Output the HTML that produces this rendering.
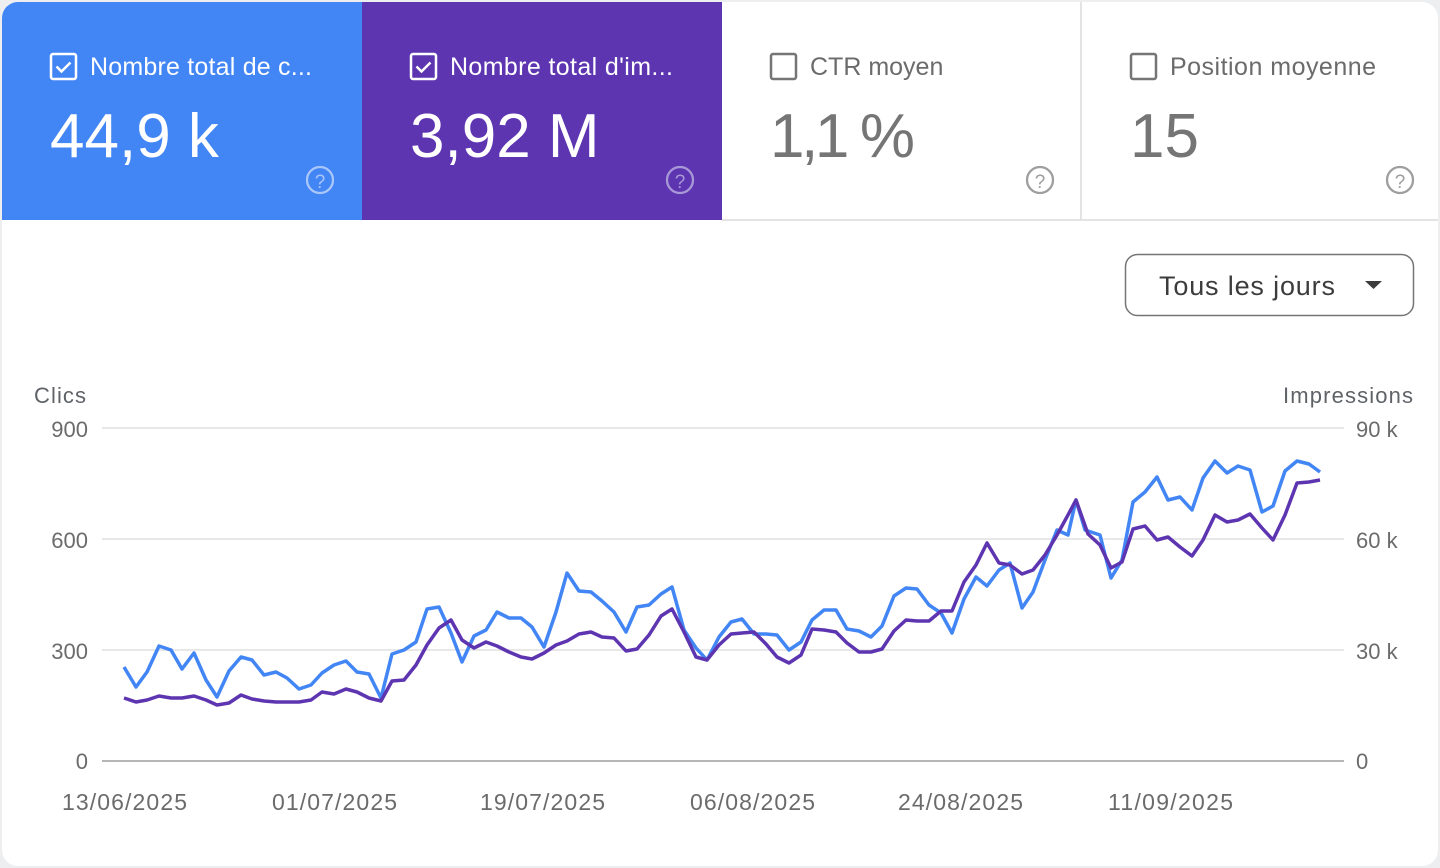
<!DOCTYPE html>
<html><head><meta charset="utf-8"><style>
html,body{margin:0;padding:0;background:#eceef0;}
body{width:1440px;height:868px;overflow:hidden;font-family:"Liberation Sans",Roboto,sans-serif;}
svg{display:block}
</style></head><body>
<svg width="1440" height="868" viewBox="0 0 1440 868" xmlns="http://www.w3.org/2000/svg" font-family="Liberation Sans, sans-serif">
<defs><clipPath id="c"><rect x="2" y="2" width="1436" height="864" rx="16"/></clipPath></defs>
<g clip-path="url(#c)">
<rect x="2" y="2" width="1436" height="864" fill="#fff"/>
<rect x="2" y="2" width="360" height="218" fill="#4285f4"/>
<rect x="362" y="2" width="360" height="218" fill="#5e35b1"/>
<rect x="1080" y="2" width="2" height="218" fill="#e3e3e3"/>
<rect x="722" y="219" width="716" height="2" fill="#e3e3e3"/>
</g>
<rect x="51" y="54" width="25" height="25" rx="2" fill="none" stroke="#fff" stroke-width="2.5"/>
<path d="M56.5 66.5l5 5 9-9" fill="none" stroke="#fff" stroke-width="2.5"/>
<text x="90" y="75" font-size="25" fill="#fff" textLength="222">Nombre total de c...</text>
<text x="50" y="157" font-size="62" fill="#fff">44,9 k</text>
<circle cx="320" cy="180" r="13" fill="none" stroke="#a9c6fa" stroke-width="2.3"/>
<text x="320" y="188" font-size="19" fill="#a9c6fa" text-anchor="middle">?</text>
<rect x="411" y="54" width="25" height="25" rx="2" fill="none" stroke="#fff" stroke-width="2.5"/>
<path d="M416.5 66.5l5 5 9-9" fill="none" stroke="#fff" stroke-width="2.5"/>
<text x="450" y="75" font-size="25" fill="#fff" textLength="223">Nombre total d'im...</text>
<text x="410" y="157" font-size="62" fill="#fff">3,92 M</text>
<circle cx="680" cy="180" r="13" fill="none" stroke="#a898d8" stroke-width="2.3"/>
<text x="680" y="188" font-size="19" fill="#a898d8" text-anchor="middle">?</text>
<rect x="771" y="54" width="25" height="25" rx="2" fill="none" stroke="#757575" stroke-width="2.5"/>
<text x="810" y="75" font-size="25" fill="#6b6b6b">CTR moyen</text>
<text x="770" y="157" font-size="62" fill="#757575" textLength="145">1,1 %</text>
<circle cx="1040" cy="180" r="13" fill="none" stroke="#9e9e9e" stroke-width="2.3"/>
<text x="1040" y="188" font-size="19" fill="#9e9e9e" text-anchor="middle">?</text>
<rect x="1131" y="54" width="25" height="25" rx="2" fill="none" stroke="#757575" stroke-width="2.5"/>
<text x="1170" y="75" font-size="25" fill="#6b6b6b" textLength="206">Position moyenne</text>
<text x="1130" y="157" font-size="62" fill="#757575">15</text>
<circle cx="1400" cy="180" r="13" fill="none" stroke="#9e9e9e" stroke-width="2.3"/>
<text x="1400" y="188" font-size="19" fill="#9e9e9e" text-anchor="middle">?</text>
<rect x="1125.5" y="254.5" width="288" height="61" rx="12" fill="#fff" stroke="#757575" stroke-width="1.5"/>
<text x="1159" y="295" font-size="27" fill="#3c3c3c" textLength="176">Tous les jours</text>
<path d="M1365 281h17l-8.5 8z" fill="#3c3c3c"/>
<text x="34" y="403" font-size="22" fill="#5f6368" textLength="52">Clics</text>
<text x="1283" y="403" font-size="22" fill="#5f6368" textLength="130">Impressions</text>
<g font-size="22" fill="#6b6b6b">
<text x="88" y="437" text-anchor="end">900</text>
<text x="88" y="548" text-anchor="end">600</text>
<text x="88" y="659" text-anchor="end">300</text>
<text x="88" y="769" text-anchor="end">0</text>
<text x="1356" y="437">90 k</text>
<text x="1356" y="548">60 k</text>
<text x="1356" y="659">30 k</text>
<text x="1356" y="769">0</text>
</g>
<g stroke="#e8e8e8" stroke-width="2">
<line x1="102" y1="428" x2="1344" y2="428"/>
<line x1="102" y1="539" x2="1344" y2="539"/>
<line x1="102" y1="650" x2="1344" y2="650"/>
</g>
<line x1="102" y1="761" x2="1344" y2="761" stroke="#9e9e9e" stroke-width="1.5"/>
<g font-size="23" fill="#6b6b6b">
<text x="62" y="810" textLength="125">13/06/2025</text>
<text x="272" y="810" textLength="125">01/07/2025</text>
<text x="480" y="810" textLength="125">19/07/2025</text>
<text x="690" y="810" textLength="125">06/08/2025</text>
<text x="898" y="810" textLength="125">24/08/2025</text>
<text x="1108" y="810" textLength="125">11/09/2025</text>
</g>
<polyline fill="none" stroke="#4285f4" stroke-width="3.5" stroke-linejoin="round" points="124,667 136,687 147,672 159,646 171,650 182,669 194,653 206,680 217,697 229,671 241,657 252,660 264,675 276,672 287,678 299,689 311,685 322,673 334,665 346,661 357,672 369,674 381,698 392,654 404,650 416,642 427,609 439,607 451,633 462,662 474,636 486,630 497,612 509,618 521,618 532,627 544,647 556,612 567,573 579,591 591,592 602,601 614,612 626,632 637,607 649,605 661,594 672,587 684,630 696,648 707,660 719,637 731,622 742,619 754,634 766,634 777,635 789,650 801,642 812,620 824,610 836,610 847,629 859,631 871,637 882,626 894,596 906,588 917,589 929,605 941,613 952,633 964,599 976,577 987,586 999,570 1010,563 1022,608 1033,592 1045,560 1057,530 1068,535 1076,500 1085,530 1100,535 1111,578 1122,560 1133,502 1145,492 1157,477 1168,500 1180,497 1192,510 1203,478 1215,461 1227,473 1238,466 1250,470 1262,512 1273,506 1285,471 1297,461 1309,464 1320,472"/>
<polyline fill="none" stroke="#5e35b1" stroke-width="3.5" stroke-linejoin="round" points="124,698 136,702 147,700 159,696 171,698 182,698 194,696 206,700 217,705 229,703 241,695 252,699 264,701 276,702 287,702 299,702 311,700 322,692 334,694 346,689 357,692 369,698 381,701 392,681 404,680 416,665 427,645 439,628 451,620 462,640 474,648 486,642 497,646 509,652 521,657 532,659 544,653 556,645 567,641 579,634 591,632 602,637 614,638 626,651 637,649 649,635 661,616 672,609 684,632 696,657 707,660 719,645 731,634 742,633 754,632 766,644 777,657 789,663 801,655 812,629 824,630 836,632 847,643 859,652 871,652 882,649 894,631 906,620 917,621 929,621 941,611 952,611 964,582 976,565 987,543 999,563 1010,565 1022,574 1033,570 1045,555 1057,535 1068,515 1076,500 1088,534 1100,545 1111,568 1122,562 1133,529 1145,526 1157,540 1168,537 1180,547 1192,556 1203,540 1215,515 1227,522 1238,520 1250,514 1262,528 1273,540 1285,515 1297,483 1309,482 1320,480"/>
</svg>
</body></html>
